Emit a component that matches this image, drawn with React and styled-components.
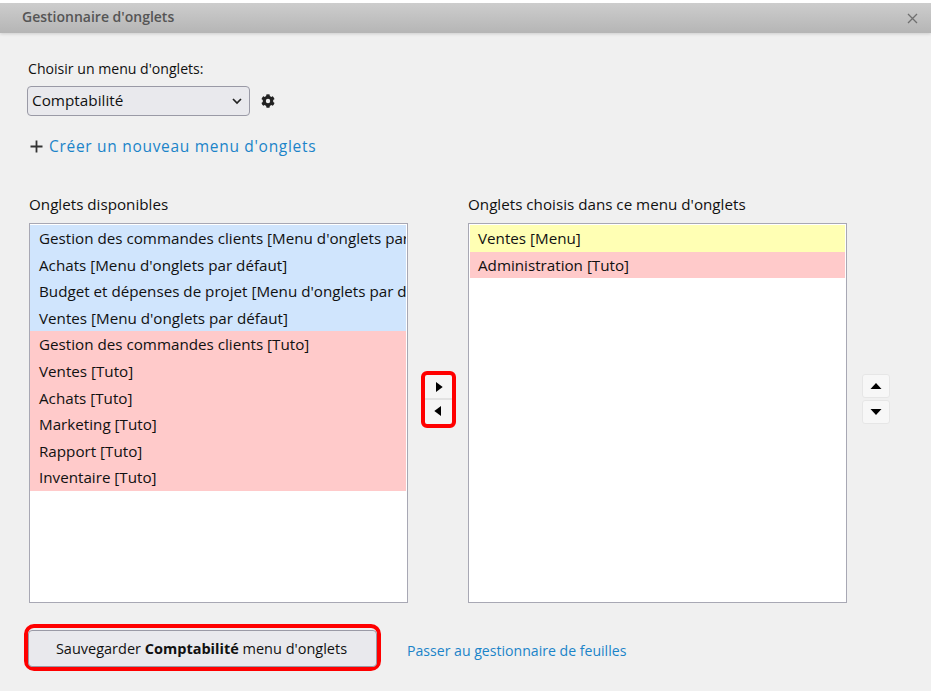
import React from "react";
import styled, { createGlobalStyle } from "styled-components";

const Global = createGlobalStyle`
  html, body { margin: 0; padding: 0; background: #fff; }
  body { font-family: "Open Sans", "Liberation Sans", sans-serif; color: #111; overflow: hidden; }
  * { box-sizing: border-box; }
`;

const Dialog = styled.div`
  width: 931px;
  height: 688px;
  margin-top: 3px;
  background: #f0f0f0;
  overflow: hidden;
`;

const Header = styled.div`
  height: 30px;
  display: flex;
  align-items: center;
  justify-content: space-between;
  padding: 0 13px 0 22px;
  background: linear-gradient(#cdcdcd, #b5b5b5);
  box-shadow: 0 1px 3px rgba(0, 0, 0, 0.15);
`;

const Title = styled.div`
  font-size: 14px;
  font-weight: 600;
  color: #555;
  padding-bottom: 3px;
`;

const CloseIcon = styled.svg`
  width: 11px;
  height: 11px;
  margin-top: 1px;
`;

const Body = styled.div`
  padding: 26px 0 0 28px;
`;

const Label = styled.div`
  font-size: 14.1px;
  line-height: 19px;
`;

const SelectRow = styled.div`
  display: flex;
  align-items: center;
  gap: 11px;
  margin-top: 8px;
  margin-left: -1px;
`;

const FakeSelect = styled.div`
  width: 223px;
  height: 30px;
  display: flex;
  align-items: center;
  justify-content: space-between;
  padding: 0 4px 2px;
  background: #e9e9ed;
  border: 1px solid #9a9aa6;
  border-radius: 4px;
  font-size: 15.3px;
`;

const CreateLink = styled.div`
  display: flex;
  align-items: center;
  gap: 6px;
  margin-top: 18px;
  margin-left: 2px;
  font-size: 15.5px;
  letter-spacing: 0.7px;
  line-height: 24px;
  color: #1b84c9;
`;

const Columns = styled.div`
  display: flex;
  align-items: flex-start;
  margin-top: 35px;
  margin-left: 1px;
`;

const ListColumn = styled.div`
  width: 379px;
  flex: none;
`;

const ColumnTitle = styled.div`
  font-size: 15.2px;
  line-height: 22px;
  margin-bottom: 8px;
`;

const ListBox = styled.div`
  height: 380px;
  background: #fff;
  border: 1px solid #a8a8b4;
  padding: ${(p) => (p.$flush ? "1px 1px 1px 0" : "1px")};
  overflow: hidden;
`;

const Item = styled.div`
  height: 26.6px;
  line-height: 27px;
  padding-left: ${(p) => (p.$flush ? "9px" : "8px")};
  font-size: 15.2px;
  white-space: nowrap;
  overflow: hidden;
  background: ${(p) => p.$bg};
`;

const MoveGroup = styled.div`
  width: 35px;
  height: 57px;
  flex: none;
  margin: 178px 12px 0 13px;
  display: flex;
  flex-direction: column;
  background: #f5f5f5;
  border: 4px solid #f00;
  border-radius: 6px;
  overflow: hidden;
`;

const MoveButton = styled.div`
  height: ${(p) => (p.$divider ? "26px" : "23px")};
  display: flex;
  align-items: center;
  justify-content: center;
  padding-bottom: ${(p) => (p.$divider ? "3px" : "0")};
  border-top: ${(p) => (p.$divider ? "2px solid #e2e2e2" : "none")};
`;

const OrderGroup = styled.div`
  flex: none;
  display: flex;
  flex-direction: column;
  gap: 2px;
  margin: 181px 0 0 15px;
`;

const OrderButton = styled.div`
  width: 28px;
  height: 24px;
  display: flex;
  align-items: center;
  justify-content: center;
  background: #f7f7f7;
  border: 1px solid #e6e6e6;
  border-radius: 3px;
`;

const Footer = styled.div`
  display: flex;
  align-items: center;
  gap: 26px;
  margin-top: 21px;
  margin-left: -4px;
`;

const SaveOutline = styled.div`
  padding: 2px 0 0;
  border: 4px solid #f00;
  border-radius: 10px;
  width: 357px;
  height: 47px;
`;

const SaveButton = styled.div`
  height: 100%;
  display: flex;
  align-items: center;
  justify-content: center;
  padding-right: 2px;
  background: #e9e9ed;
  border: 1px solid #9a9aa6;
  border-radius: 4px;
  font-size: 14.5px;
  white-space: pre;
`;

const SheetLink = styled.div`
  font-size: 14.1px;
  color: #1b84c9;
  padding-top: 5px;
`;

const Tri = ({ d }) => (
  <svg width="12" height="12" viewBox="0 0 12 12" aria-hidden="true">
    <path d={d} fill="#000" />
  </svg>
);

const left = [
  ["Gestion des commandes clients [Menu d'onglets par défaut]", "#d0e5fd"],
  ["Achats [Menu d'onglets par défaut]", "#d0e5fd"],
  ["Budget et dépenses de projet [Menu d'onglets par défaut]", "#d0e5fd"],
  ["Ventes [Menu d'onglets par défaut]", "#d0e5fd"],
  ["Gestion des commandes clients [Tuto]", "#ffcaca"],
  ["Ventes [Tuto]", "#ffcaca"],
  ["Achats [Tuto]", "#ffcaca"],
  ["Marketing [Tuto]", "#ffcaca"],
  ["Rapport [Tuto]", "#ffcaca"],
  ["Inventaire [Tuto]", "#ffcaca"],
];

const right = [
  ["Ventes [Menu]", "#ffffb4"],
  ["Administration [Tuto]", "#ffcaca"],
];

export default function App() {
  return (
    <>
      <Global />
      <Dialog>
        <Header>
          <Title>Gestionnaire d'onglets</Title>
          <CloseIcon viewBox="0 0 11 11" aria-hidden="true">
            <path d="M1 1 L10 10 M10 1 L1 10" stroke="#6f6f6f" strokeWidth="1.3" fill="none" />
          </CloseIcon>
        </Header>
        <Body>
          <Label>Choisir un menu d'onglets:</Label>
          <SelectRow>
            <FakeSelect>
              <span>Comptabilité</span>
              <svg width="16" height="16" viewBox="0 0 16 16" aria-hidden="true">
                <path d="M4 7 L8 11 L12 7" stroke="#222" strokeWidth="1.7" fill="none" />
              </svg>
            </FakeSelect>
            <svg width="14" height="14" viewBox="0 0 512 512" aria-hidden="true">
              <path
                fill="#222"
                d="M487 316l-42-25a190 190 0 0 0 0-70l42-25c5-3 7-9 6-14-11-36-30-68-55-95-4-4-10-5-15-2l-42 25a190 190 0 0 0-61-35V26c0-6-4-11-9-12a243 243 0 0 0-110 0c-6 1-10 6-10 12v49a190 190 0 0 0-60 35L89 85c-5-3-11-2-15 2-25 27-44 59-55 95-2 5 1 11 6 14l42 25a190 190 0 0 0 0 70l-42 25c-5 3-8 9-6 14 11 36 30 68 55 95 4 4 10 5 15 2l42-25a190 190 0 0 0 60 35v49c0 6 4 11 10 12a243 243 0 0 0 110 0c5-1 9-6 9-12v-49a190 190 0 0 0 61-35l42 25c5 3 11 2 15-2 25-27 44-59 55-95 1-5-1-11-6-14zM256 336a80 80 0 1 1 0-160 80 80 0 0 1 0 160z"
              />
            </svg>
          </SelectRow>
          <CreateLink>
            <svg width="13" height="13" viewBox="0 0 13 13" aria-hidden="true">
              <path d="M6.5 0.5 V12.5 M0.5 6.5 H12.5" stroke="#333" strokeWidth="1.8" fill="none" />
            </svg>
            <span>Créer un nouveau menu d'onglets</span>
          </CreateLink>
          <Columns>
            <ListColumn>
              <ColumnTitle>Onglets disponibles</ColumnTitle>
              <ListBox $flush>
                {left.map(([text, bg], i) => (
                  <Item key={i} $bg={bg} $flush>{text}</Item>
                ))}
              </ListBox>
            </ListColumn>
            <MoveGroup>
              <MoveButton>
                <Tri d="M3 1 L9.7 6 L3 11 Z" />
              </MoveButton>
              <MoveButton $divider>
                <Tri d="M8 1 L1.3 6 L8 11 Z" />
              </MoveButton>
            </MoveGroup>
            <ListColumn>
              <ColumnTitle>Onglets choisis dans ce menu d'onglets</ColumnTitle>
              <ListBox>
                {right.map(([text, bg], i) => (
                  <Item key={i} $bg={bg}>{text}</Item>
                ))}
              </ListBox>
            </ListColumn>
            <OrderGroup>
              <OrderButton>
                <Tri d="M0.5 9 L6 3 L11.5 9 Z" />
              </OrderButton>
              <OrderButton>
                <Tri d="M0.5 3 L6 9 L11.5 3 Z" />
              </OrderButton>
            </OrderGroup>
          </Columns>
          <Footer>
            <SaveOutline>
              <SaveButton>
                <span>Sauvegarder <b>Comptabilité</b> menu d'onglets</span>
              </SaveButton>
            </SaveOutline>
            <SheetLink>Passer au gestionnaire de feuilles</SheetLink>
          </Footer>
        </Body>
      </Dialog>
    </>
  );
}
